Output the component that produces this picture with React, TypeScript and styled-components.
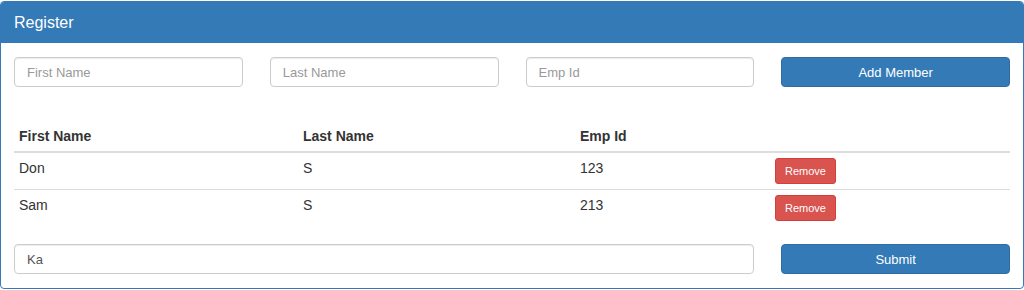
import React from "react";
import styled, { createGlobalStyle } from "styled-components";

const GlobalStyle = createGlobalStyle`
  * { box-sizing: border-box; }
  body {
    margin: 0;
    background: #fff;
    font-family: "Liberation Sans", Arial, sans-serif;
    font-size: 14px;
    color: #333;
  }
`;

const Panel = styled.section`
  margin-top: 1px;
  width: 1024px;
  border: 1px solid #337ab7;
  border-radius: 4px;
  overflow: hidden;
`;

const Heading = styled.div`
  background: #337ab7;
  color: #fff;
  padding: 10px 13px;
  font-size: 16px;
  line-height: 21px;
`;

const Body = styled.div`
  padding: 14px 13px 14px;
`;

const FormRow = styled.div`
  display: grid;
  grid-template-columns: repeat(4, 1fr);
  column-gap: 27px;
`;

const Input = styled.input<{ $span?: number }>`
  grid-column: span ${(p) => p.$span ?? 1};
  height: 30px;
  padding: 6px 12px;
  border: 1px solid #ccc;
  border-radius: 4px;
  box-shadow: inset 0 1px 1px rgba(0, 0, 0, 0.075);
  font-family: inherit;
  font-size: 13px;
  color: #555;
  outline: none;

  &::placeholder {
    color: #999;
  }
`;

const PrimaryButton = styled.button`
  height: 30px;
  border: 1px solid #2e6da4;
  border-radius: 4px;
  background: #337ab7;
  color: #fff;
  font-family: inherit;
  font-size: 13px;
  cursor: pointer;
`;

const Table = styled.table`
  width: 100%;
  margin: 34px 0 18px;
  border-collapse: separate;
  border-spacing: 0;
  table-layout: fixed;
`;

const Th = styled.th<{ $w?: number }>`
  width: ${(p) => (p.$w ? `${p.$w}px` : "auto")};
  text-align: left;
  font-weight: bold;
  padding: 5px;
  line-height: 20px;
  border-bottom: 2px solid #ddd;
`;

const Tr = styled.tr`
  & + & > td {
    border-top: 1px solid #ddd;
  }
`;

const Td = styled.td`
  padding: 5px;
  line-height: 20px;
  vertical-align: top;
`;

const DangerButton = styled.button`
  display: block;
  width: 61px;
  height: 26px;
  padding: 0;
  border: 1px solid #d43f3a;
  border-radius: 3px;
  background: #d9534f;
  color: #fff;
  font-family: inherit;
  font-size: 11px;
  cursor: pointer;
`;

const members = [
  { first: "Don", last: "S", id: "123" },
  { first: "Sam", last: "S", id: "213" },
];

export default function App(): React.ReactElement {
  return (
    <>
      <GlobalStyle />
      <Panel>
        <Heading>Register</Heading>
        <Body>
          <FormRow>
            <Input placeholder="First Name" />
            <Input placeholder="Last Name" />
            <Input placeholder="Emp Id" />
            <PrimaryButton>Add Member</PrimaryButton>
          </FormRow>
          <Table>
            <thead>
              <tr>
                <Th $w={284}>First Name</Th>
                <Th $w={277}>Last Name</Th>
                <Th $w={195}>Emp Id</Th>
                <Th />
              </tr>
            </thead>
            <tbody>
              {members.map((m) => (
                <Tr key={m.id}>
                  <Td>{m.first}</Td>
                  <Td>{m.last}</Td>
                  <Td>{m.id}</Td>
                  <Td>
                    <DangerButton>Remove</DangerButton>
                  </Td>
                </Tr>
              ))}
            </tbody>
          </Table>
          <FormRow>
            <Input $span={3} defaultValue="Ka" />
            <PrimaryButton>Submit</PrimaryButton>
          </FormRow>
        </Body>
      </Panel>
    </>
  );
}
